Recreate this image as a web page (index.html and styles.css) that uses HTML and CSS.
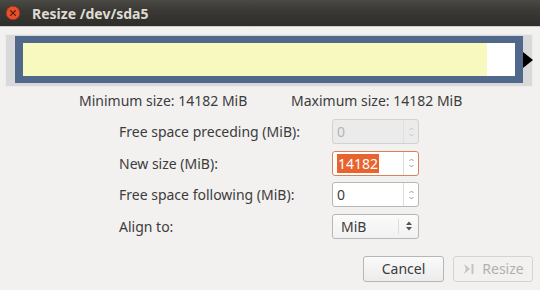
FILE: index.html
```html
<!DOCTYPE html>
<html>
<head>
<meta charset="utf-8">
<link rel="stylesheet" href="styles.css">
</head>
<body>
<div class="window">
  <div class="titlebar">
    <span class="close"><svg width="14" height="14" viewBox="0 0 14 14"><circle cx="7" cy="7" r="6.8" fill="#e8502a"/><circle cx="7" cy="7" r="6.8" fill="none" stroke="#9c3216" stroke-width="0.6"/><path d="M4.6 4.6 L9.4 9.4 M9.4 4.6 L4.6 9.4" stroke="#5a1a08" stroke-width="1.3" stroke-linecap="round"/></svg></span>
    <span class="title">Resize /dev/sda5</span>
  </div>
  <div class="partition">
    <div class="frame">
      <div class="used"></div>
      <div class="unused"></div>
    </div>
    <span class="handle"></span>
  </div>
  <div class="sizes">
    <span class="min">Minimum size: 14182 MiB</span>
    <span class="max">Maximum size: 14182 MiB</span>
  </div>
  <div class="form">
    <label class="lbl">Free space preceding (MiB):</label>
    <div class="spin disabled"><span class="val">0</span><span class="arrows"><svg width="7" height="14" viewBox="0 0 7 14"><path d="M1.5 5 L3.5 3 L5.5 5 M1.5 9 L3.5 11 L5.5 9" fill="none" stroke="#c8c8c8" stroke-width="1"/></svg></span></div>
    <label class="lbl">New size (MiB):</label>
    <div class="spin focus"><span class="val"><span class="sel">14182</span></span><span class="arrows"><svg width="7" height="14" viewBox="0 0 7 14"><path d="M1.5 5 L3.5 3 L5.5 5 M1.5 9 L3.5 11 L5.5 9" fill="none" stroke="#9a9a9a" stroke-width="1"/></svg></span></div>
    <label class="lbl">Free space following (MiB):</label>
    <div class="spin"><span class="val">0</span><span class="arrows"><svg width="7" height="14" viewBox="0 0 7 14"><path d="M1.5 5 L3.5 3 L5.5 5 M1.5 9 L3.5 11 L5.5 9" fill="none" stroke="#9a9a9a" stroke-width="1"/></svg></span></div>
    <label class="lbl">Align to:</label>
    <div class="combo"><span class="val">MiB</span><span class="carets"><svg width="8" height="14" viewBox="0 0 8 14"><path d="M1 6 L4 2.5 L7 6 Z M1 8 L4 11.5 L7 8 Z" fill="#555"/></svg></span></div>
  </div>
  <div class="buttons">
    <button class="btn">Cancel</button>
    <button class="btn disabled"><svg width="14" height="14" viewBox="0 0 14 14"><path d="M2 2 L8 7 L2 12 L4 7 Z" fill="#c4c4c4"/><rect x="9.5" y="2" width="2" height="10" fill="#c4c4c4"/></svg>Resize</button>
  </div>
</div>
</body>
</html>
```
FILE: styles.css
```css
html, body {
  margin: 0;
  padding: 0;
}
body {
  width: 540px;
  height: 290px;
  overflow: hidden;
  background: #f2f1f0;
  font-family: "Noto Sans", "Open Sans", sans-serif;
  font-size: 14px;
  color: #3c3c3c;
}
.window {
  display: flex;
  flex-direction: column;
  height: 290px;
}
.titlebar {
  background: linear-gradient(#4a4944, #3a3935 40%, #2f2e2a);
  border-bottom: 1px solid #cfcdc8;
  display: flex;
  align-items: center;
  padding-left: 6px;
  box-sizing: border-box;
  height: 27px;
}
.close {
  width: 14px;
  height: 14px;
  display: flex;
}
.title {
  margin-left: 12px;
  color: #dfdbd2;
  font-weight: bold;
  font-size: 14px;
}
.partition {
  position: relative;
  margin: 7px 0 0 5px;
  width: 528px;
  height: 53px;
  box-sizing: border-box;
  background: #d9d9d9;
  border: 1px solid #ececec;
  padding: 1px 9px;
}
.frame {
  height: 47px;
  box-sizing: border-box;
  border: 7px solid #50698a;
  border-left-width: 8px;
  border-right-width: 8px;
  display: flex;
}
.used {
  width: 464px;
  background: #f8f9bf;
}
.unused {
  flex: 1;
  background: #ffffff;
}
.handle {
  position: absolute;
  right: -1px;
  top: 17px;
  width: 0;
  height: 0;
  border-top: 8.5px solid transparent;
  border-bottom: 8.5px solid transparent;
  border-left: 10px solid #000;
}
.sizes {
  display: grid;
  grid-template-columns: 212px auto;
  padding-left: 79px;
  margin-top: 4px;
  height: 19px;
  line-height: 19px;
}
.form {
  display: grid;
  grid-template-columns: 213px 87px;
  grid-auto-rows: 25px;
  row-gap: 6.5px;
  padding-left: 119px;
  margin-top: 9px;
  align-items: center;
}
.lbl {
  line-height: 25px;
}
.spin, .combo {
  height: 25px;
  box-sizing: border-box;
  border: 1px solid #b9b7b3;
  border-radius: 3px;
  background: #ffffff;
  display: flex;
  align-items: stretch;
}
.spin .val, .combo .val {
  flex: 1;
  display: flex;
  align-items: center;
  padding-left: 4px;
}
.arrows {
  width: 14px;
  border-left: 1px solid #dcdcdc;
  display: flex;
  align-items: center;
  justify-content: center;
}
.disabled.spin {
  background: #ebebeb;
  border-color: #d3d1cd;
  color: #b5b5b5;
}
.disabled .arrows {
  border-left-color: #e0e0e0;
}
.focus {
  border-color: #d9825a;
}
.sel {
  background: #e8632d;
  color: #ffffff;
  padding: 0 1px;
  line-height: 19px;
}
.combo {
  background: linear-gradient(#fbfbfb, #f1f1f1);
}
.combo .val {
  padding-left: 8px;
}
.carets {
  width: 19px;
  border-left: 1px solid #dcdcdc;
  display: flex;
  align-items: center;
  justify-content: center;
  margin: 4px 0;
}
.buttons {
  display: flex;
  justify-content: flex-end;
  gap: 9px;
  padding-right: 7px;
  margin-top: 17px;
}
.btn {
  width: 81px;
  height: 26px;
  box-sizing: border-box;
  border: 1px solid #b8b6b2;
  border-radius: 3px;
  background: linear-gradient(#fafafa, #ececec);
  font-family: inherit;
  font-size: 14px;
  color: #3c3c3c;
  display: flex;
  align-items: center;
  justify-content: center;
  gap: 6px;
  padding: 0;
}
.btn.disabled {
  width: 80px;
  color: #b0b0b0;
  border-color: #d6d4d0;
  background: #f2f1f0;
}
```
